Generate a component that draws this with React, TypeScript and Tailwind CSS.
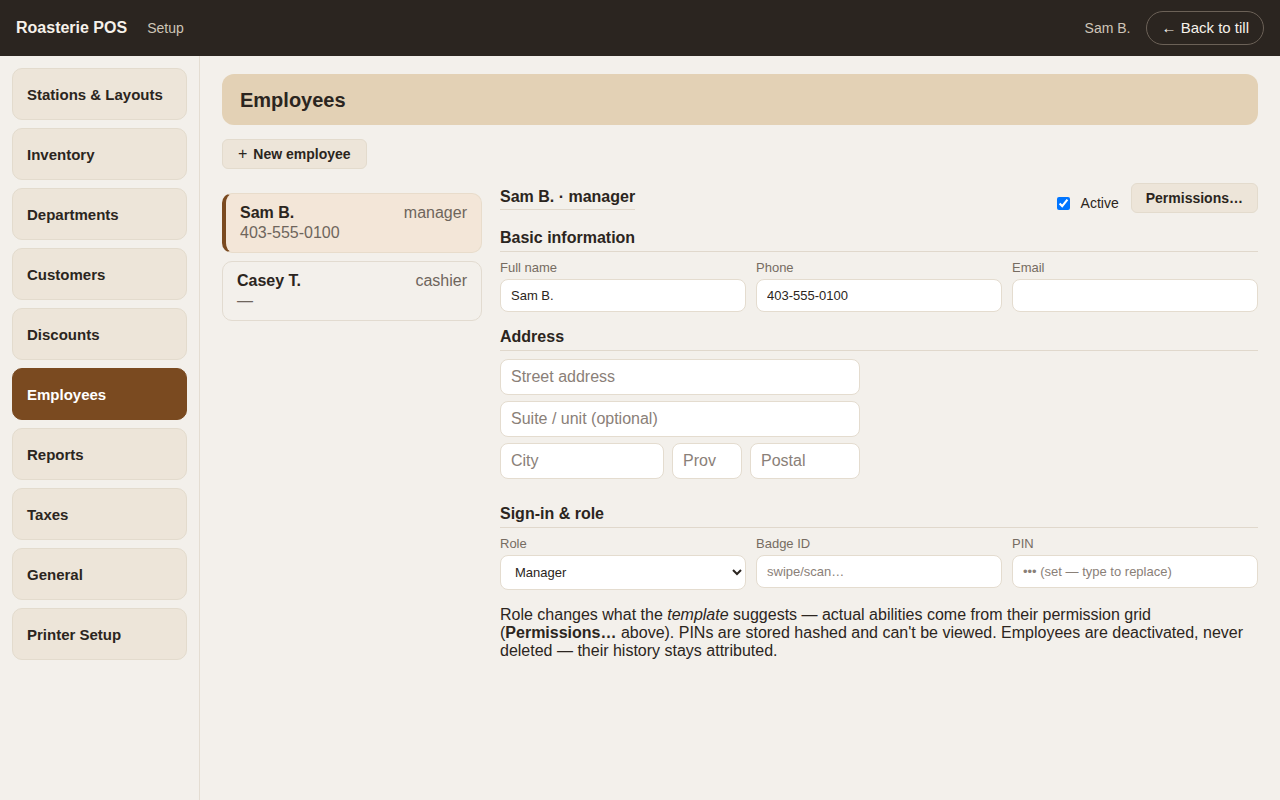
import { useState } from "react";

const navItems = [
  "Stations & Layouts",
  "Inventory",
  "Departments",
  "Customers",
  "Discounts",
  "Employees",
  "Reports",
  "Taxes",
  "General",
  "Printer Setup",
];

const employees = [
  { name: "Sam B.", role: "manager", phone: "403-555-0100" },
  { name: "Casey T.", role: "cashier", phone: "—" },
];

const inputBase =
  "rounded-lg border border-[#e4dccf] bg-white px-[10px] text-[#2b2520] outline-none placeholder:text-[#8a8078]";

const SectionHeading = ({ children }: { children: React.ReactNode }) => (
  <h3 className="border-b border-[#e0d8cc] pt-px pb-[3px] text-[16px] leading-5 font-bold text-[#2b2520]">
    {children}
  </h3>
);

const Field = ({ label, children }: { label: string; children: React.ReactNode }) => (
  <label className="flex flex-col">
    <span className="mb-1 text-[13px] leading-[15px] text-[#766c62]">{label}</span>
    {children}
  </label>
);

export default function App() {
  const [selected, setSelected] = useState(0);
  const [active, setActive] = useState(true);

  return (
    <div
      className="flex h-[800px] w-[1280px] flex-col bg-[#f3f0eb] text-[#2b2520]"
      style={{ fontFamily: '"Liberation Sans", Arial, sans-serif' }}
    >
      {/* top bar */}
      <header className="flex h-14 shrink-0 items-center justify-between bg-[#2b2520] px-4">
        <div className="flex items-baseline gap-5">
          <span className="text-[16px] font-bold text-[#f6f1ea]">Roasterie POS</span>
          <span className="text-[14px] text-[#cfc5b8]">Setup</span>
        </div>
        <div className="flex items-center gap-4">
          <span className="text-[14px] text-[#cfc5b8]">Sam B.</span>
          <button className="h-[34px] rounded-full border border-[#6b6157] px-[14px] text-[15px] text-[#f6f1ea]">
            ← Back to till
          </button>
        </div>
      </header>

      <div className="flex min-h-0 flex-1">
        {/* sidebar */}
        <nav className="flex w-[200px] shrink-0 flex-col gap-2 border-r border-[#e4ddd2] p-3">
          {navItems.map((item) => {
            const on = item === "Employees";
            return (
              <button
                key={item}
                className={
                  on
                    ? "h-[52px] rounded-[10px] border border-[#7a4a20] bg-[#7a4a20] px-[14px] pt-[2px] text-left text-[15px] font-bold text-white"
                    : "h-[52px] rounded-[10px] border border-[#e3dbcd] bg-[#ede5d9] px-[14px] pt-[2px] text-left text-[15px] font-bold text-[#2b2520]"
                }
              >
                {item}
              </button>
            );
          })}
        </nav>

        {/* main */}
        <main className="flex-1 px-[22px] pt-[18px]">
          <div className="flex h-[51px] items-center rounded-xl bg-[#e3d1b5] px-[18px]">
            <h1 className="text-[20px] font-bold text-[#2b2520]">Employees</h1>
          </div>

          <button className="mt-[14px] flex h-[30px] items-center gap-[6px] rounded-md border border-[#e3dbcd] bg-[#ede5d9] px-[15px] text-[14px] font-bold">
            <span className="text-[16px] font-normal leading-none">+</span>
            New employee
          </button>

          <div className="mt-[13px] flex gap-[18px]">
            {/* employee list */}
            <div className="mt-[11px] flex w-[260px] shrink-0 flex-col gap-2">
              {employees.map((e, i) => (
                <button
                  key={e.name}
                  onClick={() => setSelected(i)}
                  className={
                    i === selected
                      ? "flex h-[60px] flex-col justify-center rounded-[10px] border border-l-4 border-[#e8dccb] border-l-[#7a4a20] bg-[#f3e6d8] px-[14px] text-left"
                      : "flex h-[60px] flex-col justify-center rounded-[10px] border border-[#e2dbd0] bg-transparent px-[14px] text-left"
                  }
                >
                  <div className="flex w-full items-center justify-between text-[16px] leading-5">
                    <span className="font-bold">{e.name}</span>
                    <span className="text-[#6e655c]">{e.role}</span>
                  </div>
                  <span className="text-[16px] leading-5 text-[#6e655c]">{e.phone}</span>
                </button>
              ))}
            </div>

            {/* detail */}
            <div className="flex-1">
              <div className="flex items-center justify-between">
                <h2 className="border-b border-[#e0d8cc] pt-px pb-[2px] text-[16px] leading-5 font-bold">
                  Sam B. · manager
                </h2>
                <div className="flex items-center">
                  <label className="mt-[11px] flex items-center gap-[11px] text-[14px]">
                    <input
                      type="checkbox"
                      checked={active}
                      onChange={(ev) => setActive(ev.target.checked)}
                      className="m-0 h-[13px] w-[13px]"
                    />
                    Active
                  </label>
                  <button className="ml-3 h-[30px] rounded-md border border-[#e3dbcd] bg-[#ede5d9] px-[14px] text-[14px] font-bold">
                    Permissions…
                  </button>
                </div>
              </div>

              <section className="mt-[13px]">
                <SectionHeading>Basic information</SectionHeading>
                <div className="mt-2 grid grid-cols-3 gap-[10px]">
                  <Field label="Full name">
                    <input className={`${inputBase} h-[33px] w-full text-[13px]`} defaultValue="Sam B." />
                  </Field>
                  <Field label="Phone">
                    <input className={`${inputBase} h-[33px] w-full text-[13px]`} defaultValue="403-555-0100" />
                  </Field>
                  <Field label="Email">
                    <input className={`${inputBase} h-[33px] w-full text-[13px]`} />
                  </Field>
                </div>
              </section>

              <section className="mt-[14px]">
                <SectionHeading>Address</SectionHeading>
                <div className="mt-2 flex w-[360px] flex-col gap-[6px]">
                  <input className={`${inputBase} h-9 w-full text-[16px]`} placeholder="Street address" />
                  <input className={`${inputBase} h-9 w-full text-[16px]`} placeholder="Suite / unit (optional)" />
                  <div className="flex gap-2">
                    <input className={`${inputBase} h-9 w-[164px] min-w-0 shrink-0 text-[16px]`} placeholder="City" />
                    <input className={`${inputBase} h-9 w-[70px] min-w-0 shrink-0 text-[16px]`} placeholder="Prov" />
                    <input className={`${inputBase} h-9 w-[110px] min-w-0 shrink-0 text-[16px]`} placeholder="Postal" />
                  </div>
                </div>
              </section>

              <section className="mt-6">
                <SectionHeading>Sign-in &amp; role</SectionHeading>
                <div className="mt-2 grid grid-cols-3 items-start gap-[10px]">
                  <Field label="Role">
                    <select
                      className="h-[35px] w-full rounded-lg border border-[#e4dccf] bg-white px-[10px] text-[13px] text-[#2b2520]"
                      defaultValue="Manager"
                    >
                      <option>Manager</option>
                      <option>Cashier</option>
                      <option>Barista</option>
                    </select>
                  </Field>
                  <Field label="Badge ID">
                    <input className={`${inputBase} h-[33px] w-full text-[13px]`} placeholder="swipe/scan…" />
                  </Field>
                  <Field label="PIN">
                    <input
                      className={`${inputBase} h-[33px] w-full text-[13px]`}
                      placeholder="••• (set — type to replace)"
                    />
                  </Field>
                </div>
              </section>

              <p className="mt-4 text-[16px] leading-[18px] text-[#2b2520]">
                Role changes what the <em>template</em> suggests — actual abilities come from their
                permission grid (<strong>Permissions…</strong> above). PINs are stored hashed and
                can't be viewed. Employees are deactivated, never deleted — their history stays
                attributed.
              </p>
            </div>
          </div>
        </main>
      </div>
    </div>
  );
}
